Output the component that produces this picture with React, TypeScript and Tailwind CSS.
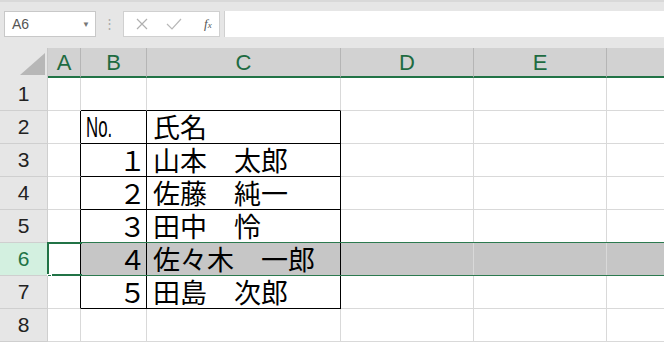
import React from 'react';

const cols = [
  { key: 'A', w: 'w-[33px]' },
  { key: 'B', w: 'w-[66px]' },
  { key: 'C', w: 'w-[194px]' },
  { key: 'D', w: 'w-[133px]' },
  { key: 'E', w: 'w-[133px]' },
];

const rows = [
  { n: 1, b: '', c: '' },
  { n: 2, b: 'No.', c: '氏名' },
  { n: 3, b: '１', c: '山本　太郎' },
  { n: 4, b: '２', c: '佐藤　純一' },
  { n: 5, b: '３', c: '田中　怜' },
  { n: 6, b: '４', c: '佐々木　一郎' },
  { n: 7, b: '５', c: '田島　次郎' },
  { n: 8, b: '', c: '' },
];

const jp = "font-['MS_PGothic','Noto_Sans_CJK_JP',sans-serif]";

const FormulaBar = () => (
  <div className="h-[48px] bg-[#e6e6e6] border-t-2 border-[#d9d9d9] flex items-start pt-[9px] pl-[4px]">
    {/* Name box */}
    <div className="w-[92px] h-[26px] bg-white border border-[#c8c8c8] flex items-center justify-between pl-[7px] pr-[5px]">
      <span className="text-[14px] text-[#555] font-['Liberation_Sans',sans-serif]">A6</span>
      <span className="text-[8px] text-[#777]">▼</span>
    </div>
    <div className="w-[27px] h-[26px] flex items-center justify-center text-[#aaa] text-[13px]">⋮</div>
    {/* Buttons */}
    <div className="w-[97px] h-[26px] bg-white border border-[#d0d0d0] flex items-center pl-[12px] gap-[14px]">
      <svg width="12" height="12" viewBox="0 0 12 12" className="stroke-[#b0b0b0]">
        <path d="M1 1 L11 11 M11 1 L1 11" strokeWidth="1.2" fill="none" />
      </svg>
      <svg width="16" height="12" viewBox="0 0 16 12" className="stroke-[#b8b8b8] ml-[4px]">
        <path d="M1 6 L6 11 L15 1" strokeWidth="1.2" fill="none" />
      </svg>
      <span className="ml-[8px] text-[13px] italic text-[#555] font-['Liberation_Serif',serif]">
        f<span className="text-[9px]">x</span>
      </span>
    </div>
    <div className="ml-[4px] flex-1 h-[26px] bg-white border-l border-[#d0d0d0]" />
  </div>
);

const HeaderRow = () => (
  <div className="flex h-[30px]">
    <div className="w-[48px] shrink-0 bg-[#e6e6e6] border-r border-[#c8c8c8] relative">
      <svg width="48" height="30" className="absolute inset-0">
        <polygon points="20,27 45,27 45,5" fill="#b7b7b7" />
      </svg>
    </div>
    {cols.map((c) => (
      <div
        key={c.key}
        className={`${c.w} shrink-0 bg-[#d2d2d2] border-r border-[#b5b5b5] border-b-2 border-b-[#217346] flex items-center justify-center text-[22px] text-[#1e6b41] font-['Liberation_Sans',sans-serif]`}
      >
        {c.key}
      </div>
    ))}
    <div className="flex-1 bg-[#d2d2d2] border-b-2 border-b-[#217346]" />
  </div>
);

const Row = ({ r }: { r: (typeof rows)[number] }) => {
  const inTable = r.n >= 2 && r.n <= 7;
  const selected = r.n === 6;
  const sel = selected ? 'bg-[#c6c6c6]' : 'bg-white';
  return (
    <div className="flex h-[33px] relative">
      <div
        className={`w-[48px] shrink-0 border-r border-b border-[#cfcfcf] flex items-center justify-center text-[21px] font-['Liberation_Sans',sans-serif] ${
          selected ? 'bg-[#d3f0e0] text-[#217346]' : 'bg-[#e6e6e6] text-[#222]'
        }`}
      >
        {r.n}
      </div>
      {/* A */}
      <div
        className={`w-[33px] shrink-0 bg-white border-b border-[#d9d9d9] border-r ${
          inTable ? 'border-r-black' : 'border-r-[#d9d9d9]'
        }`}
      />
      {/* B */}
      <div
        className={`w-[66px] shrink-0 ${sel} border-r border-b ${
          inTable ? 'border-black' : r.n === 1 ? 'border-r-[#d9d9d9] border-b-black' : 'border-[#d9d9d9]'
        } flex items-end justify-end pb-[1px] text-[27px] leading-[30px] text-black ${jp}`}
      >
        {r.b === 'No.' ? (
          <span className="mr-auto ml-[5px] inline-block origin-left scale-x-58 font-['Liberation_Sans',sans-serif] text-[29px] leading-[30px]">
            No.
          </span>
        ) : (
          <span>{r.b}</span>
        )}
      </div>
      {/* C */}
      <div
        className={`w-[194px] shrink-0 ${sel} border-r border-b ${
          inTable ? 'border-black' : r.n === 1 ? 'border-r-[#d9d9d9] border-b-black' : 'border-[#d9d9d9]'
        } flex items-end pl-[6px] pb-[1px] text-[27px] leading-[30px] text-black whitespace-pre ${jp}`}
      >
        {r.c}
      </div>
      {/* D, E, F */}
      <div className={`w-[133px] shrink-0 ${sel} border-r border-b border-[#d9d9d9]`} />
      <div className={`w-[133px] shrink-0 ${sel} border-r border-b border-[#d9d9d9]`} />
      <div className={`flex-1 ${sel} border-b border-[#d9d9d9]`} />

      {selected && (
        <>
          {/* row selection outline */}
          <div className="absolute left-[48px] right-0 top-[-1px] bottom-0 border-y border-[#2c7a4f] pointer-events-none" />
          {/* active cell */}
          <div className="absolute left-[47px] top-[-1px] w-[35px] h-[34px] border-2 border-r-0 border-[#217346] pointer-events-none" />
          <div className="absolute left-[47px] bottom-[-3px] w-[5px] h-[5px] bg-[#217346] border border-white" />
        </>
      )}
    </div>
  );
};

export default function App() {
  return (
    <div className="w-[664px] h-[343px] overflow-hidden bg-white select-none">
      <FormulaBar />
      <HeaderRow />
      {rows.map((r) => (
        <Row key={r.n} r={r} />
      ))}
    </div>
  );
}
